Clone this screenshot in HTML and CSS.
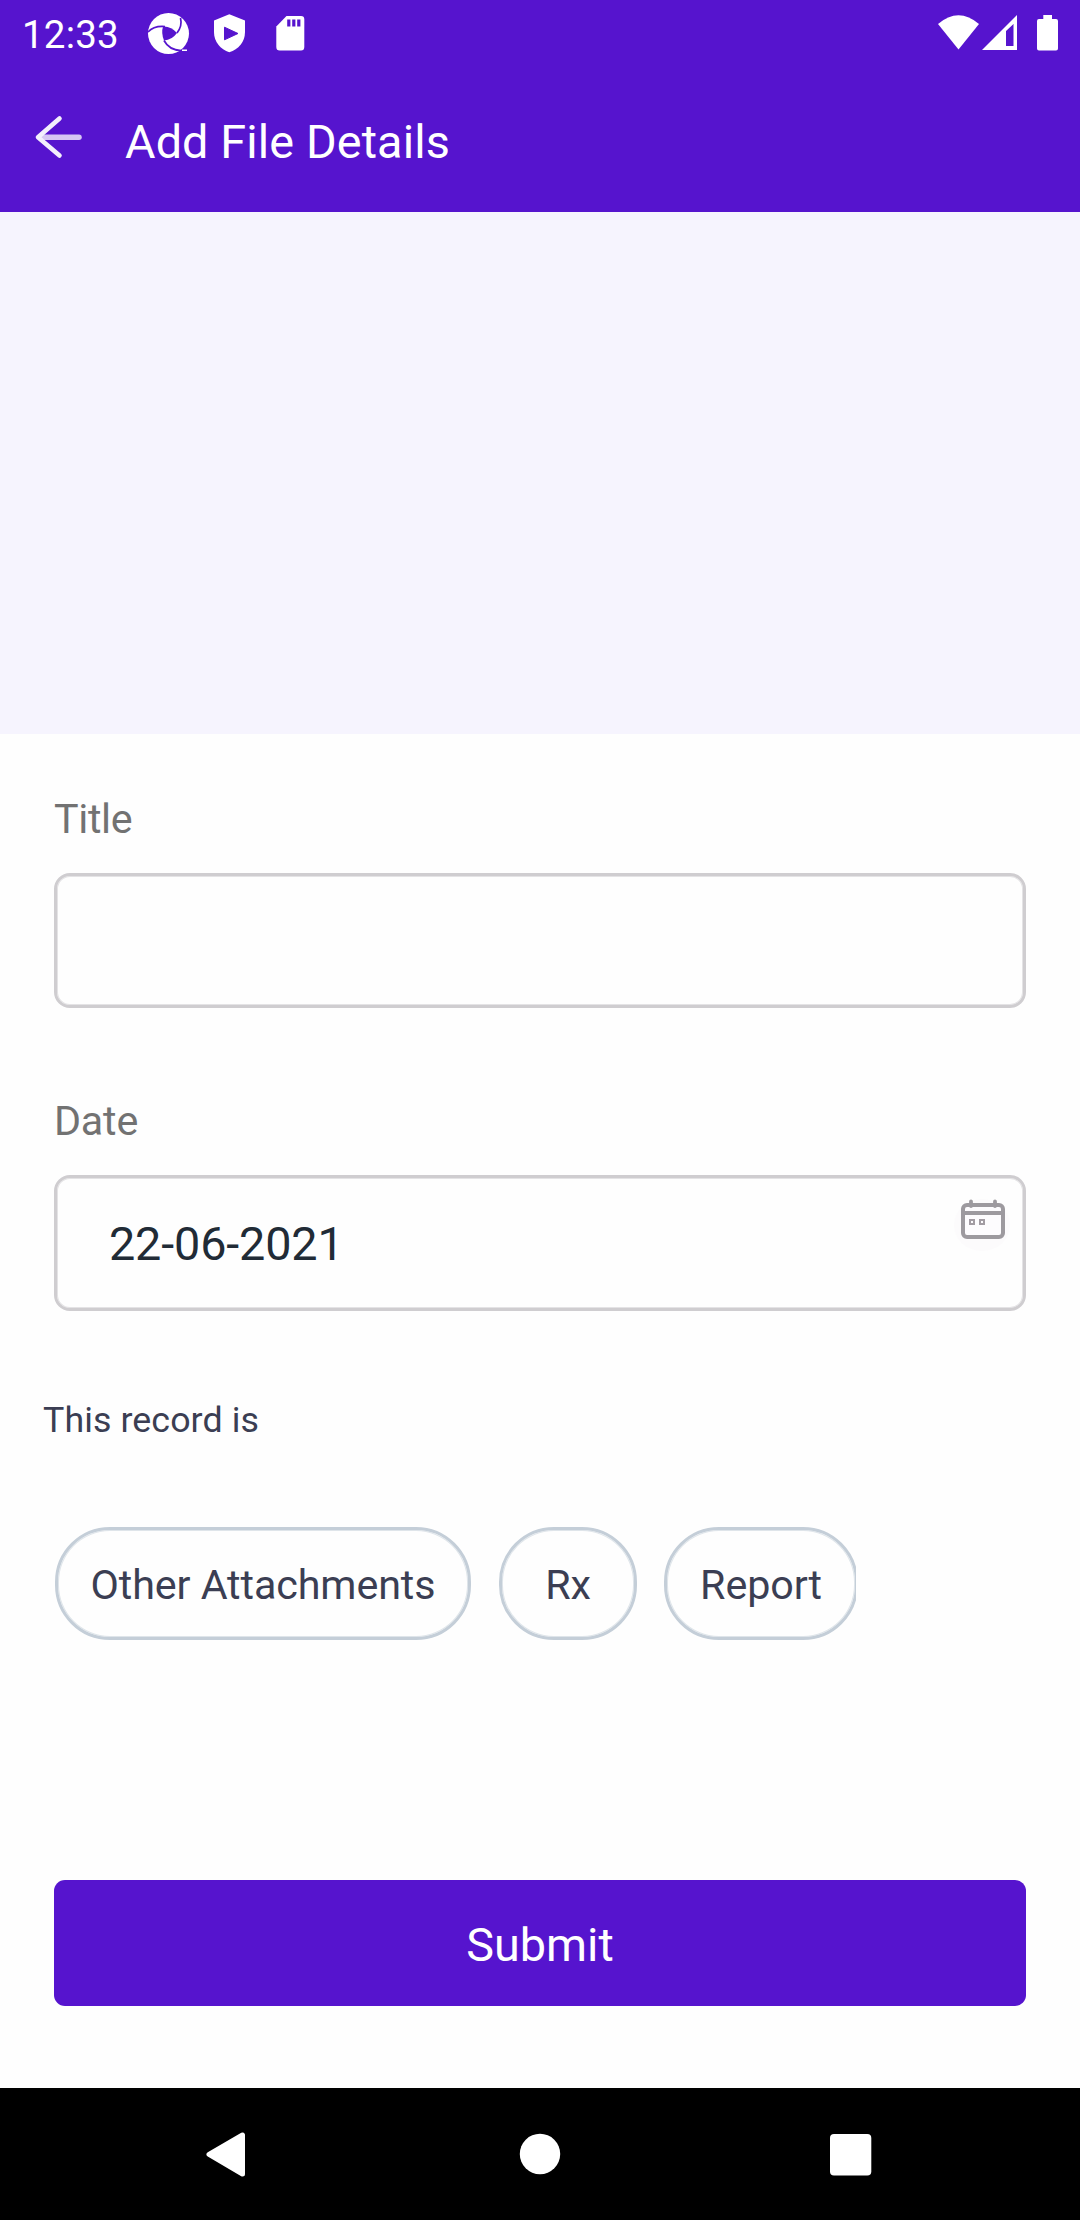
FILE: index.html
```html
<!DOCTYPE html>
<html lang="en">
<head>
<meta charset="utf-8">
<title>Add File Details</title>
<link rel="stylesheet" href="styles.css">
</head>
<body>
<div class="screen">
  <header class="top">
    <div class="status">
      <span class="clock">12:33</span>
      <svg class="notif" width="190" height="68" viewBox="0 0 190 68">
        <circle cx="28.500" cy="33.500" r="20.500" fill="#fff"/>
        <path d="M23 26.500Q31 26 37 33Q32 40 24 40.500Q21 33 23 26.500Z" fill="#5614ce"/>
        <path d="M8 32Q14 25.500 25 26.500M40.500 18Q42.500 26 37 33M24 40.500Q29 50 41 50.500" fill="none" stroke="#5614ce" stroke-width="1.700"/>
        <path d="M42 49.500h5v1.500h-5z" fill="#fff"/>
        <path d="M89.300 14.300L105 20.500V32C105 42 98.500 49.500 89.300 52.300C80.500 49.500 74 42 74 32V20.500Z" fill="#fff"/>
        <path d="M84.500 27.200V39.800L98 33.500Z" fill="#5614ce" stroke="#5614ce" stroke-width="1" stroke-linejoin="round"/>
        <path d="M146.500 16H161Q164.300 16 164.300 19.300V47Q164.300 50.500 161 50.500H139.700Q136.300 50.500 136.300 47V26.500Z" fill="#fff"/>
        <path d="M147.200 19.500h3.200v7h-3.200zM152.200 19.500h3.200v7h-3.200zM157.200 19.500h3.200v7h-3.200z" fill="#5614ce"/>
      </svg>
      <svg class="system" width="130" height="68" viewBox="0 0 130 68">
        <path d="M8 24Q28.500 6.500 49 24L28.500 49.500Z" fill="#fff"/>
        <path d="M52 50L87 15V50ZM76 31V46H83.500V24Z" fill="#fff" fill-rule="evenodd"/>
        <path d="M113.300 15h8.700v4h4q2 0 2 2v27.500q0 2-2 2h-17q-2 0-2-2V21q0-2 2-2h4.300z" fill="#fff"/>
      </svg>
    </div>
    <div class="appbar">
      <svg class="back" width="50" height="50" viewBox="0 0 50 50">
        <path d="M8 25.300H45" stroke="#d6c6f3" stroke-width="5.500" stroke-linecap="round"/>
        <path d="M25.500 6.500L4 25.300L25.500 43.500" fill="none" stroke="#f3effc" stroke-width="4.600" stroke-linecap="round" stroke-linejoin="round"/>
      </svg>
      <h1 class="heading">Add File Details</h1>
    </div>
  </header>
  <div class="preview"></div>
  <main class="form">
    <div class="label title">Title</div>
    <div class="field"></div>
    <div class="label second">Date</div>
    <div class="field date">
      <span class="value">22-06-2021</span>
      <svg class="calendar" width="60" height="70" viewBox="0 0 60 70">
        <ellipse class="glow" cx="29" cy="36" rx="28" ry="26"/>
        <rect x="10" y="16" width="40" height="32" rx="4" fill="#fdfcfe" stroke="#9d9a9f" stroke-width="4"/>
        <path d="M10 24H50M18 12.500V17M42 12.500V17" fill="none" stroke="#9d9a9f" stroke-width="3.800" stroke-linecap="round"/>
        <rect x="17" y="31" width="4" height="4" fill="none" stroke="#a29ca3" stroke-width="2"/>
        <rect x="27" y="31" width="4" height="4" fill="none" stroke="#a29ca3" stroke-width="2"/>
      </svg>
    </div>
    <div class="question">This record is</div>
    <div class="chips">
      <div class="chip other">Other Attachments</div>
      <div class="chip rx">Rx</div>
      <div class="clip"><div class="chip report">Report</div></div>
    </div>
    <div class="submit">Submit</div>
  </main>
  <nav class="nav">
    <svg width="1080" height="132" viewBox="0 0 1080 132">
      <path d="M209 66.300L242.500 47V86Z" fill="#fff" stroke="#fff" stroke-width="5" stroke-linejoin="round"/>
      <circle cx="540" cy="66" r="20.200" fill="#fff"/>
      <rect x="830" y="46" width="41.300" height="41.500" rx="4" fill="#fff"/>
    </svg>
  </nav>
</div>
</body>
</html>
```
FILE: styles.css
```css
* { box-sizing: border-box; }
body { margin: 0; background: #fff; font-family: Roboto, sans-serif; }
svg { display: block; flex: none; }
.screen { width: 1080px; height: 2220px; display: flex; flex-direction: column; overflow: hidden; background: #fefefe; }
.top { height: 212px; background: #5614ce; color: #fff; }
.status { height: 68px; display: flex; padding-left: 22px; }
.clock { width: 118px; font-size: 38.5px; line-height: 70px; letter-spacing: .2px; }
.system { margin-left: 600px; }
.appbar { height: 144px; display: flex; padding-left: 34px; }
.back { margin-top: 44px; width: 50px; }
.heading { margin: 44px 0 0 41px; font-size: 46.75px; font-weight: 400; line-height: 60px; letter-spacing: .13px; }
.preview { height: 522px; background: #f6f4fe; }
.form { height: 1354px; padding: 61px 54px 0; display: flex; flex-direction: column; }
.label { height: 48px; line-height: 48px; font-size: 41.25px; letter-spacing: -.2px; color: #727272; }
.title { letter-spacing: -.35px; }
.second { margin-top: 89px; }
.field { margin-top: 30px; height: 135px; border: 3px solid #cfcdd0; box-shadow: inset 0 0 0 1px #e4e3e5; border-radius: 16px; display: flex; justify-content: space-between; }
.date { height: 136px; }
.value { padding-left: 52px; line-height: 132px; font-size: 46.75px; letter-spacing: -.15px; color: #212b36; }
.calendar { margin: 11px 10px 0 0; }
.glow { fill: #fcfbfc; }
.question { margin: 87px 0 0 -11px; height: 44px; line-height: 44px; font-size: 35.75px; letter-spacing: .08px; color: #3b3e53; }
.chips { margin: 85px 0 0 1px; display: flex; }
.chip { height: 113px; border: 3px solid #c4ced8; box-shadow: inset 0 0 0 1px #dfe5ea; border-radius: 55px; text-align: center; line-height: 111px; font-size: 41.25px; letter-spacing: -.1px; color: #3b3e53; }
.other { width: 416px; }
.rx { width: 138px; margin-left: 28px; }
.clip { width: 192px; margin-left: 27px; overflow: hidden; }
.report { width: 194px; }
.submit { margin-top: 240px; height: 126px; border-radius: 11px; background: #5614ce; color: #fff; text-align: center; line-height: 130px; font-size: 46.75px; }
.nav { height: 132px; background: #000; }
```
